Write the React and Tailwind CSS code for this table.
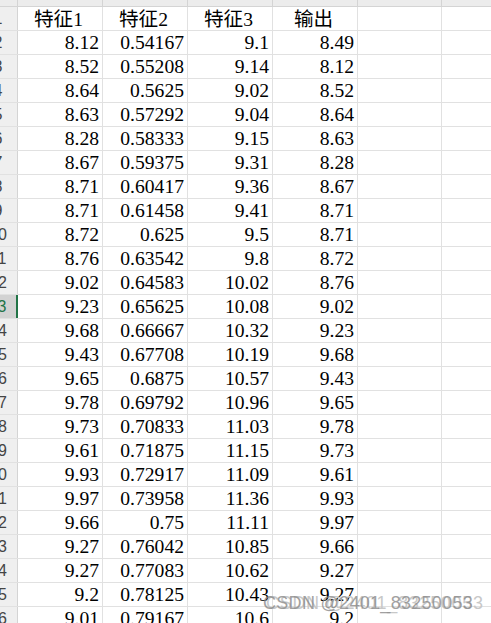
import React from 'react';

const col1 = ['8.12', '8.52', '8.64', '8.63', '8.28', '8.67', '8.71', '8.71', '8.72', '8.76', '9.02', '9.23', '9.68', '9.43', '9.65', '9.78', '9.73', '9.61', '9.93', '9.97', '9.66', '9.27', '9.27', '9.2', '9.01'];
const col2 = ['0.54167', '0.55208', '0.5625', '0.57292', '0.58333', '0.59375', '0.60417', '0.61458', '0.625', '0.63542', '0.64583', '0.65625', '0.66667', '0.67708', '0.6875', '0.69792', '0.70833', '0.71875', '0.72917', '0.73958', '0.75', '0.76042', '0.77083', '0.78125', '0.79167'];
const col3 = ['9.1', '9.14', '9.02', '9.04', '9.15', '9.31', '9.36', '9.41', '9.5', '9.8', '10.02', '10.08', '10.32', '10.19', '10.57', '10.96', '11.03', '11.15', '11.09', '11.36', '11.11', '10.85', '10.62', '10.43', '10.6'];
const col4 = ['8.49', '8.12', '8.52', '8.64', '8.63', '8.28', '8.67', '8.71', '8.71', '8.72', '8.76', '9.02', '9.23', '9.68', '9.43', '9.65', '9.78', '9.73', '9.61', '9.93', '9.97', '9.66', '9.27', '9.27', '9.2'];

const rows = col1.map((v, i) => [v, col2[i], col3[i], col4[i]]);

// widths of the visible columns (border included)
const widths = ['w-[85px]', 'w-[85px]', 'w-[85px]', 'w-[85px]', 'w-[84px]', 'w-[84px]'];

function RowHead({ n, active }) {
  return (
    <div
      className={`w-[39px] shrink-0 h-full flex items-center justify-center border-r text-[16px] ${
        active ? 'bg-[#d2d2d2] text-[#217346] border-r-2 border-[#217346]' : 'bg-[#efefef] text-[#444] border-[#d4d4d4]'
      }`}
      style={{ fontFamily: '"Liberation Sans", Arial, sans-serif' }}
    >
      {n}
    </div>
  );
}

function Cell({ w, children, center }) {
  return (
    <div
      className={`${w} shrink-0 h-full border-r border-[#e1e1e1] flex ${center ? 'justify-center pt-[2px]' : 'justify-end pt-[1px]'} pr-[3px] leading-[22px] whitespace-nowrap`}
    >
      {children}
    </div>
  );
}

export default function App() {
  return (
    <div className="relative w-[491px] h-[623px] overflow-hidden bg-white">
      <div
        className="-ml-[21px] w-[600px] text-[19.6px] text-black"
        style={{ fontFamily: '"Liberation Serif", "Noto Sans CJK SC", serif' }}
      >
        {/* column letters strip, mostly cut off */}
        <div className="flex h-[7px] bg-[#ececec] border-b border-[#d4d4d4]">
          <div className="w-[39px] shrink-0 border-r border-[#d4d4d4]" />
          {widths.map((w, i) => (
            <div key={i} className={`${w} shrink-0 border-r border-[#d4d4d4]`} />
          ))}
        </div>

        {/* header row */}
        <div className="flex h-[24px] border-b border-[#e1e1e1]">
          <RowHead n={1} />
          {['特征1', '特征2', '特征3', '输出'].map((t, i) => (
            <Cell key={t} w={widths[i]} center>
              {t}
            </Cell>
          ))}
          <Cell w={widths[4]} />
          <Cell w={widths[5]} />
        </div>

        {rows.map((r, i) => (
          <div key={i} className="flex h-[24px] border-b border-[#e1e1e1]">
            <RowHead n={i + 2} active={i + 2 === 13} />
            {r.map((v, j) => (
              <Cell key={j} w={widths[j]}>
                {v}
              </Cell>
            ))}
            <Cell w={widths[4]} />
            <Cell w={widths[5]} />
          </div>
        ))}
      </div>

      {/* watermark */}
      <div
        className="absolute left-[263px] top-[592px] text-[18px] leading-[22px] whitespace-nowrap tracking-[0.3px]"
        style={{ fontFamily: '"Liberation Sans", Arial, sans-serif' }}
      >
        <span className="absolute left-[3px] top-0 text-[#c8c8c8] tracking-[0.7px]">CSDN @2401_83250053</span>
        <span className="relative text-[#8a8a8a] opacity-80">CSDN @2401_83250053</span>
      </div>
    </div>
  );
}
